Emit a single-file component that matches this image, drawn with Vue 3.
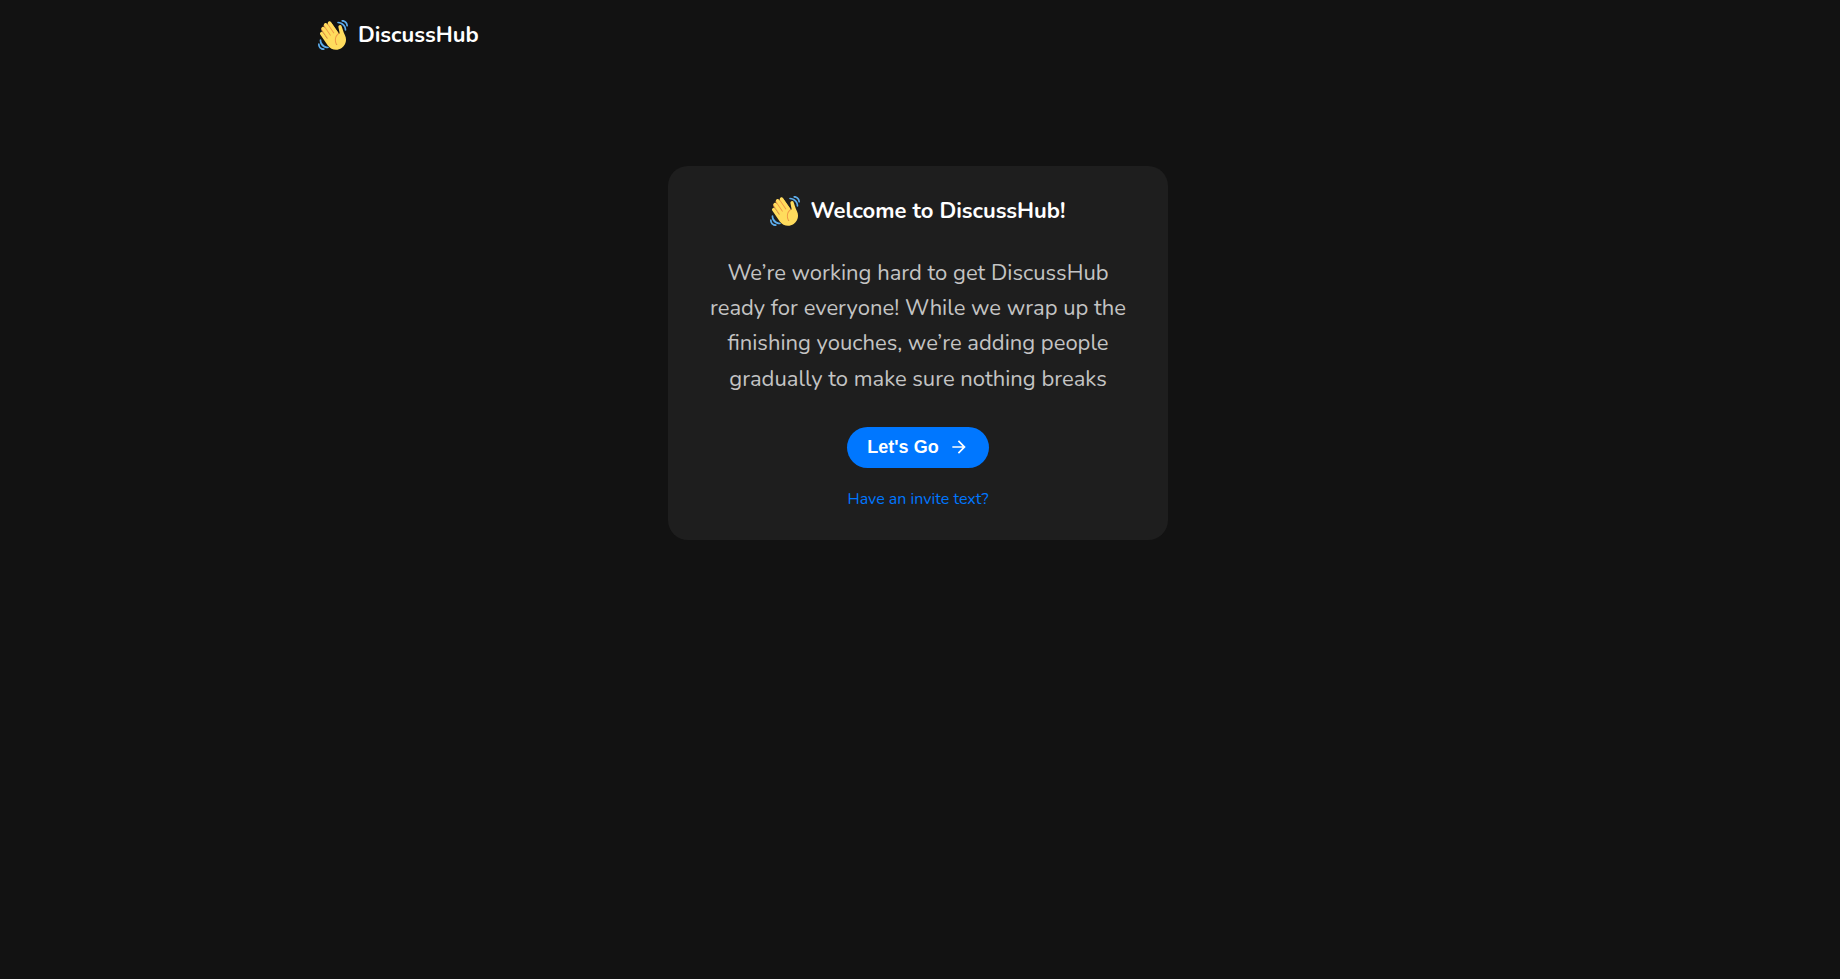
<script setup>
import { h } from 'vue'

const paragraph =
  'We’re working hard to get DiscussHub ready for everyone! While we wrap up the finishing youches, we’re adding people gradually to make sure nothing breaks'

const wavePaths = [
  ['#EF9645', 'M4.861 9.147c.94-.657 2.357-.531 3.201.166l-.968-1.407c-.779-1.111-.5-2.313.612-3.093 1.112-.777 4.263 1.312 4.263 1.312-.786-1.122-.639-2.544.483-3.331 1.122-.784 2.67-.513 3.456.611l10.42 14.72L25 31l-11.083-4.042L4.25 12.625c-.793-1.129-.519-2.686.611-3.478z'],
  ['#FFDC5D', 'M2.695 17.336s-1.132-1.65.519-2.781c1.649-1.131 2.78.518 2.78.518l5.251 7.658c.181-.302.379-.6.6-.894L4.557 11.21s-1.131-1.649.519-2.78c1.649-1.131 2.78.518 2.78.518l6.855 9.997c.255-.208.516-.417.785-.622L7.549 6.732s-1.131-1.649.519-2.78c1.649-1.131 2.78.518 2.78.518l7.947 11.589c.292-.179.581-.334.871-.498L12.238 4.729s-1.131-1.649.518-2.78c1.649-1.131 2.78.518 2.78.518l7.854 11.454 1.194 1.742c-4.948 3.394-5.419 9.779-2.592 13.902.565.825 1.39.26 1.39.26-3.393-4.949-2.357-10.51 2.592-13.903L24.515 8.62s-.545-1.924 1.378-2.47c1.924-.545 2.47 1.379 2.47 1.379l1.685 5.004c.668 1.984 1.379 3.961 2.32 5.831 2.657 5.28 1.07 11.842-3.94 15.279-5.465 3.747-12.936 2.354-16.684-3.11L2.695 17.336z'],
  ['#5DADEC', 'M12 32.042C8 32.042 3.958 28 3.958 24c0-.553-.405-1-.958-1s-1.042.447-1.042 1C1.958 30 6 34.042 12 34.042c.553 0 1-.489 1-1.042s-.447-.958-1-.958z'],
  ['#5DADEC', 'M7 34c-3 0-5-2-5-5 0-.553-.447-1-1-1s-1 .447-1 1c0 4 3 7 7 7 .553 0 1-.447 1-1s-.447-1-1-1zM24 2c-.552 0-1 .448-1 1s.448 1 1 1c4 0 8 3.589 8 8 0 .552.448 1 1 1s1-.448 1-1c0-5.514-4-10-10-10z'],
  ['#5DADEC', 'M29 .042c-.552 0-1 .406-1 .958s.448 1.042 1 1.042c3 0 4.958 2.225 4.958 4.958 0 .552.489 1 1.042 1s.958-.448.958-1C35.958 3.163 33 .042 29 .042z'],
]

const WaveIcon = () =>
  h(
    'svg',
    { width: 30, height: 30, viewBox: '0 0 36 36', 'aria-hidden': 'true' },
    wavePaths.map(([fill, d]) => h('path', { fill, d })),
  )
</script>

<template>
  <div class="page">
    <header class="header">
      <a class="brand" href="#">
        <WaveIcon />
        <span>DiscussHub</span>
      </a>
    </header>
    <main class="main">
      <section class="card">
        <h1 class="title">
          <WaveIcon />
          <span>Welcome to DiscussHub!</span>
        </h1>
        <p class="text">{{ paragraph }}</p>
        <button class="button" type="button">
          <span>Let's Go</span>
          <svg width="20" height="20" viewBox="0 0 24 24" fill="currentColor" aria-hidden="true">
            <path d="M12 4l-1.41 1.41L16.17 11H4v2h12.17l-5.58 5.59L12 20l8-8z" />
          </svg>
        </button>
        <a class="link" href="#">Have an invite text?</a>
      </section>
    </main>
  </div>
</template>

<style>
body {
  background: #121212;
}
</style>

<style scoped>
.page {
  min-height: 100vh;
  box-sizing: border-box;
  padding: 20px 24px 20px 20px;
  font-family: Nunito, Lato, sans-serif;
  color: #fff;
}

.header {
  max-width: 1200px;
  margin: 0 auto;
}

.brand,
.title {
  display: flex;
  align-items: center;
  gap: 10px;
  height: 30px;
  margin: 0;
  font-size: 22px;
  font-weight: 700;
  color: #fff;
  text-decoration: none;
}

.brand {
  width: fit-content;
}

.main {
  display: flex;
  justify-content: center;
  margin-top: 116px;
}

.card {
  box-sizing: border-box;
  width: 100%;
  max-width: 500px;
  padding: 30px;
  border-radius: 20px;
  background: #1e1e1e;
  display: flex;
  flex-direction: column;
  align-items: center;
}

.text {
  max-width: 440px;
  margin: 30px 0;
  font-size: 22px;
  line-height: 1.6;
  text-align: center;
  color: #c4c4c4;
}

.button {
  display: flex;
  align-items: center;
  gap: 10px;
  padding: 10px 20px;
  border: 0;
  border-radius: 24px;
  background: #0077ff;
  color: #fff;
  font: 700 18px/21px "Liberation Sans", Arial, sans-serif;
}

.link {
  margin-top: 20px;
  font-size: 16px;
  line-height: 22px;
  color: #0077ff;
  text-decoration: none;
}
</style>
